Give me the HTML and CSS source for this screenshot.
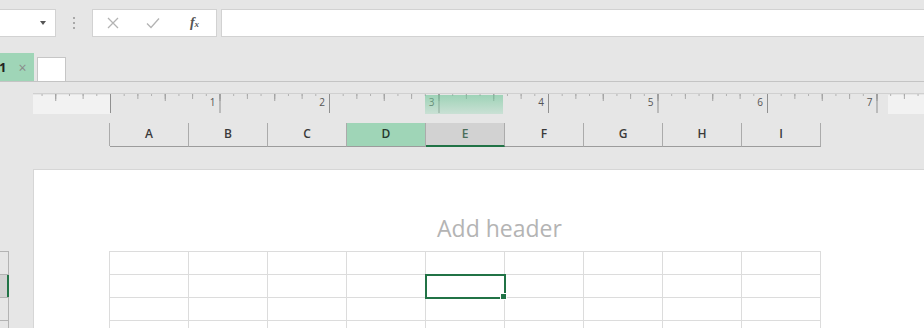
FILE: index.html
```html
<!DOCTYPE html>
<html lang="en">
<head>
    <meta charset="UTF-8">
    <title>Page Layout</title>
    <link rel="stylesheet" href="styles.css">
</head>
<body>
    <div class="formula-row">
        <div class="name-box"><span class="caret"></span></div>
        <div class="grip"><i></i><i></i><i></i></div>
        <div class="fx-buttons">
            <span>
                <svg width="12" height="12" viewBox="0 0 12 12"><path d="M1 1L11 11M11 1L1 11" stroke="#b3b3b3" stroke-width="1.3" fill="none"/></svg>
            </span>
            <span>
                <svg width="14" height="12" viewBox="0 0 14 12"><path d="M1 6.5L5 10.5L13 1.5" stroke="#b3b3b3" stroke-width="1.3" fill="none"/></svg>
            </span>
            <span class="fx">f<sub>x</sub></span>
        </div>
        <div class="formula-input"></div>
    </div>

    <div class="tab-row">
        <div class="tab active"><b>1</b><span class="close">&times;</span></div>
        <div class="tab new"></div>
    </div>

    <div class="ruler">
        <div class="ruler-nums">
            <span>1</span><span>2</span><span>3</span><span>4</span><span>5</span><span>6</span><span>7</span>
        </div>
    </div>

    <div class="col-headers">
        <div>A</div>
        <div>B</div>
        <div>C</div>
        <div class="picked">D</div>
        <div class="current">E</div>
        <div>F</div>
        <div>G</div>
        <div>H</div>
        <div>I</div>
    </div>

    <div class="sheet-area">
        <div class="row-headers">
            <div></div>
            <div class="current"></div>
            <div></div>
            <div></div>
        </div>
        <div class="page">
            <div class="page-header">Add header</div>
            <div class="grid">
                <div></div><div></div><div></div><div></div><div></div><div></div><div></div><div></div><div></div>
                <div></div><div></div><div></div><div></div><div class="active"></div><div></div><div></div><div></div><div></div>
                <div></div><div></div><div></div><div></div><div></div><div></div><div></div><div></div><div></div>
                <div></div><div></div><div></div><div></div><div></div><div></div><div></div><div></div><div></div>
            </div>
        </div>
    </div>
</body>
</html>
```

FILE: styles.css
```css
* {
    box-sizing: border-box;
}
body {
    margin: 0;
    height: 328px;
    overflow: hidden;
    background-color: #e6e6e6;
    font-family: "Open Sans", "Noto Sans", sans-serif;
    display: flex;
    flex-direction: column;
}

/* formula bar */
.formula-row {
    display: flex;
    height: 28px;
    margin-top: 9px;
    flex-shrink: 0;
}
.name-box {
    width: 56px;
    background-color: #fff;
    border: 1px solid #d2d2d2;
    border-left: none;
    display: flex;
    align-items: center;
    justify-content: flex-end;
    padding-right: 9px;
}
.caret {
    width: 0;
    height: 0;
    border-left: 3.5px solid transparent;
    border-right: 3.5px solid transparent;
    border-top: 4px solid #555;
}
.grip {
    width: 36px;
    display: flex;
    flex-direction: column;
    align-items: center;
    justify-content: center;
    gap: 3px;
}
.grip i {
    width: 2px;
    height: 2px;
    background-color: #a8a8a8;
}
.fx-buttons {
    width: 125px;
    background-color: #fff;
    border: 1px solid #d2d2d2;
    display: flex;
    align-items: center;
}
.fx-buttons span {
    width: 40px;
    display: flex;
    justify-content: center;
    align-items: center;
}
.fx-buttons .fx {
    width: 43px;
    font-family: "Liberation Serif", serif;
    font-style: italic;
    font-weight: bold;
    font-size: 14px;
    color: #555;
    line-height: 14px;
}
.fx sub {
    font-size: 9px;
    vertical-align: baseline;
    position: relative;
    top: 1px;
}
.formula-input {
    flex: 1;
    margin-left: 4px;
    background-color: #fff;
    border: 1px solid #d2d2d2;
    border-right: none;
}

/* sheet tabs */
.tab-row {
    display: flex;
    align-items: flex-end;
    height: 29px;
    margin-top: 16px;
    border-bottom: 1px solid #c4c4c4;
    flex-shrink: 0;
}
.tab.active {
    width: 34px;
    height: 28px;
    background-color: #9fd5b7;
    display: flex;
    align-items: center;
    font-size: 13px;
    color: #222;
}
.tab.active b {
    margin-left: -1px;
}
.tab .close {
    margin-left: 12px;
    color: #8a8a8a;
    font-size: 14px;
}
.tab.new {
    width: 29px;
    height: 24px;
    margin-left: 3px;
    background-color: #fff;
    border: 1px solid #c6c6c6;
    border-bottom: none;
}

/* ruler */
.ruler {
    position: relative;
    height: 21px;
    margin: 11px 0 0 33px;
    border-top: 1px solid #d0d0d0;
    flex-shrink: 0;
    background:
        linear-gradient(to right, #909090 1px, transparent 1px) 77px 0 / 109.5px 19px repeat-x,
        linear-gradient(to right, #a0a0a0 1px, transparent 1px) 77px 0 / 54.75px 7px repeat-x,
        linear-gradient(to right, #a8a8a8 1px, transparent 1px) 77px 0 / 27.375px 5px repeat-x,
        linear-gradient(to right, #b0b0b0 1px, transparent 1px) 77px 0 / 13.6875px 2px repeat-x,
        linear-gradient(to right, #f2f2f2 77px, transparent 77px calc(100% - 36px), #f2f2f2 calc(100% - 36px)) 0 1px / 100% 19px no-repeat;
}
.ruler::after {
    content: "";
    position: absolute;
    left: 392px;
    top: 1px;
    width: 78px;
    height: 19px;
    background: linear-gradient(rgba(110, 198, 152, 0.6), rgba(150, 214, 180, 0.35));
}
.ruler-nums {
    display: flex;
    padding-left: 77px;
    padding-top: 3px;
}
.ruler-nums span {
    flex: 0 0 109.5px;
    text-align: right;
    padding-right: 4px;
    font-size: 10px;
    line-height: 10px;
    color: #555;
}

/* column headers */
.col-headers {
    display: grid;
    grid-template-columns: repeat(9, 79px);
    height: 23px;
    margin: 9px 0 0 109px;
    border-left: 1px solid #ababab;
    flex-shrink: 0;
}
.col-headers div {
    border-right: 1px solid #ababab;
    border-bottom: 1px solid #9c9c9c;
    text-align: center;
    font-size: 12px;
    font-weight: 600;
    line-height: 22px;
    color: #3a3a3a;
}
.col-headers .picked {
    background-color: #9fd5b7;
    color: #263a2e;
}
.col-headers .current {
    background-color: #d2d2d2;
    border-bottom: 2px solid #217346;
    color: #4b6e5a;
}

/* page */
.sheet-area {
    flex: 1;
    display: flex;
    margin-top: 23px;
}
.row-headers {
    width: 9px;
    margin-top: 82px;
    border-top: 1px solid #b3b3b3;
    border-right: 1px solid #b3b3b3;
    align-self: flex-start;
}
.row-headers div {
    height: 23px;
    border-bottom: 1px solid #b3b3b3;
}
.row-headers .current {
    background-color: #d2d2d2;
    box-shadow: inset -2px 0 #217346;
    margin-right: -1px;
}
.page {
    flex: 1;
    margin-left: 24px;
    background-color: #fff;
    border-top: 1px solid #d6d6d6;
    border-left: 1px solid #d6d6d6;
}
.page-header {
    height: 81px;
    width: 781px;
    margin-left: 75px;
    padding-top: 45px;
    text-align: center;
    font-size: 23px;
    line-height: 26px;
    color: #b4b4b4;
}
.grid {
    display: grid;
    grid-template-columns: repeat(9, 79px);
    grid-auto-rows: 23px;
    margin-left: 75px;
    width: 712px;
    border-left: 1px solid #dcdcdc;
    border-top: 1px solid #dcdcdc;
}
.grid div {
    border-right: 1px solid #dcdcdc;
    border-bottom: 1px solid #dcdcdc;
}
.grid .active {
    position: relative;
    outline: 2px solid #217346;
    outline-offset: -1px;
}
.grid .active::after {
    content: "";
    position: absolute;
    right: -3px;
    bottom: -3px;
    width: 5px;
    height: 5px;
    background-color: #217346;
    border: 1px solid #fff;
}
```
